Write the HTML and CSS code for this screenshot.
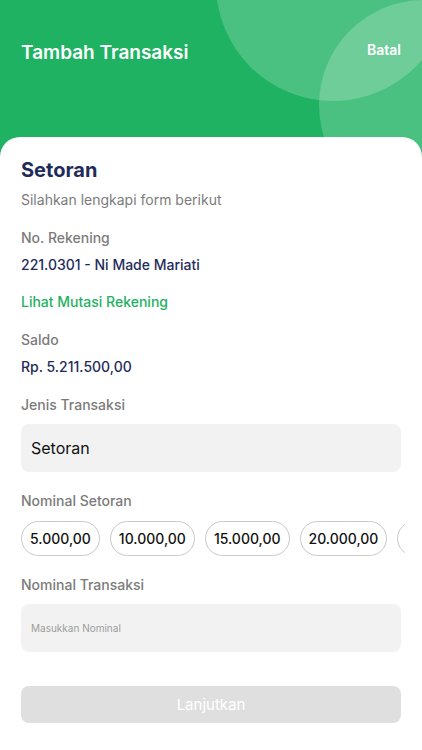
FILE: index.html
```html
<!DOCTYPE html>
<html lang="id">
  <head>
    <meta charset="UTF-8" />
    <meta name="viewport" content="width=device-width, initial-scale=1.0" />
    <title>Tambah Transaksi</title>
    <link rel="stylesheet" href="styles.css">
  </head>
  <body>
    <div class="page">
      <header class="header">
        <div class="circle circle-1"></div>
        <div class="circle circle-2"></div>
        <h1 class="header-title">Tambah Transaksi</h1>
        <a class="header-cancel" href="#">Batal</a>
      </header>

      <main class="card">
        <h2 class="card-title">Setoran</h2>
        <p class="subtitle">Silahkan lengkapi form berikut</p>

        <p class="label">No. Rekening</p>
        <p class="value">221.0301 - Ni Made Mariati</p>

        <a class="link" href="#">Lihat Mutasi Rekening</a>

        <p class="label">Saldo</p>
        <p class="value">Rp. 5.211.500,00</p>

        <p class="label">Jenis Transaksi</p>
        <div class="field">Setoran</div>

        <p class="label label-chips">Nominal Setoran</p>
        <div class="chips">
          <button class="chip">5.000,00</button>
          <button class="chip">10.000,00</button>
          <button class="chip">15.000,00</button>
          <button class="chip">20.000,00</button>
          <button class="chip chip-more"></button>
        </div>

        <p class="label label-chips">Nominal Transaksi</p>
        <input class="field field-input" type="text" placeholder="Masukkan Nominal" />

        <button class="submit" disabled>Lanjutkan</button>
      </main>
    </div>
  </body>
</html>
```

FILE: styles.css
```css
* {
  box-sizing: border-box;
}
body {
  margin: 0;
  font-family: Inter, "Noto Sans", sans-serif;
  background-color: #1eb262;
}
.page {
  position: relative;
  min-height: 750px;
  overflow: hidden;
}

/* header hijau */
.header {
  position: relative;
  height: 137px;
  display: flex;
  justify-content: space-between;
  align-items: flex-start;
  padding: 39px 21px 0 21px;
}
.circle {
  position: absolute;
  border-radius: 50%;
  background-color: rgba(255, 255, 255, 0.2);
}
.circle-1 {
  width: 234px;
  height: 234px;
  left: 216px;
  top: -133px;
}
.circle-2 {
  width: 210px;
  height: 210px;
  left: 319px;
  top: 0;
}
.header-title {
  position: relative;
  margin: 0;
  font-size: 19px;
  line-height: 28px;
  font-weight: 600;
  color: white;
}
.header-cancel {
  position: relative;
  margin-top: 1px;
  font-size: 14px;
  line-height: 20px;
  font-weight: 600;
  color: white;
  text-decoration: none;
}

/* kartu form */
.card {
  position: relative;
  z-index: 1;
  min-height: 613px;
  background-color: white;
  border-radius: 20px 20px 0 0;
  padding: 19px 21px 30px 21px;
  display: flex;
  flex-direction: column;
  align-items: flex-start;
}
.card-title {
  margin: 0;
  font-size: 20px;
  line-height: 28px;
  font-weight: 700;
  color: #1f2b5b;
}
.subtitle {
  margin: 6px 0 0 0;
  font-size: 14px;
  line-height: 20px;
  color: #7b7b7b;
}
.label {
  margin: 18px 0 0 0;
  font-size: 14px;
  line-height: 20px;
  font-weight: 500;
  color: #7b7b7b;
}
.label-chips {
  margin-top: 19px;
}
.value {
  margin: 7px 0 0 0;
  font-size: 14px;
  line-height: 20px;
  font-weight: 500;
  color: #1f2b5b;
}
.link {
  margin-top: 17px;
  font-size: 14px;
  line-height: 20px;
  font-weight: 500;
  color: #1eb262;
  text-decoration: none;
}
.field {
  width: 100%;
  height: 48px;
  margin-top: 9px;
  padding: 0 10px;
  display: flex;
  align-items: center;
  background-color: #f2f2f2;
  border: none;
  border-radius: 8px;
  font-family: inherit;
  font-size: 16px;
  color: #111;
}
.field-input {
  font-size: 10px;
  outline: none;
}
.field-input::placeholder {
  color: #9c9c9c;
}
.chips {
  width: calc(100% + 4px);
  margin-top: 10px;
  display: flex;
  gap: 10px;
  overflow: hidden;
}
.chip {
  flex-shrink: 0;
  height: 35px;
  padding: 0 8px;
  background-color: white;
  border: 1px solid #c8c8c8;
  border-radius: 18px;
  font-family: inherit;
  font-size: 14px;
  font-weight: 500;
  color: #111;
}
.chip-more {
  width: 40px;
}
.submit {
  width: 100%;
  height: 37px;
  margin-top: 34px;
  background-color: #dfdfdf;
  border: none;
  border-radius: 8px;
  font-family: inherit;
  font-size: 15px;
  color: white;
}
```
